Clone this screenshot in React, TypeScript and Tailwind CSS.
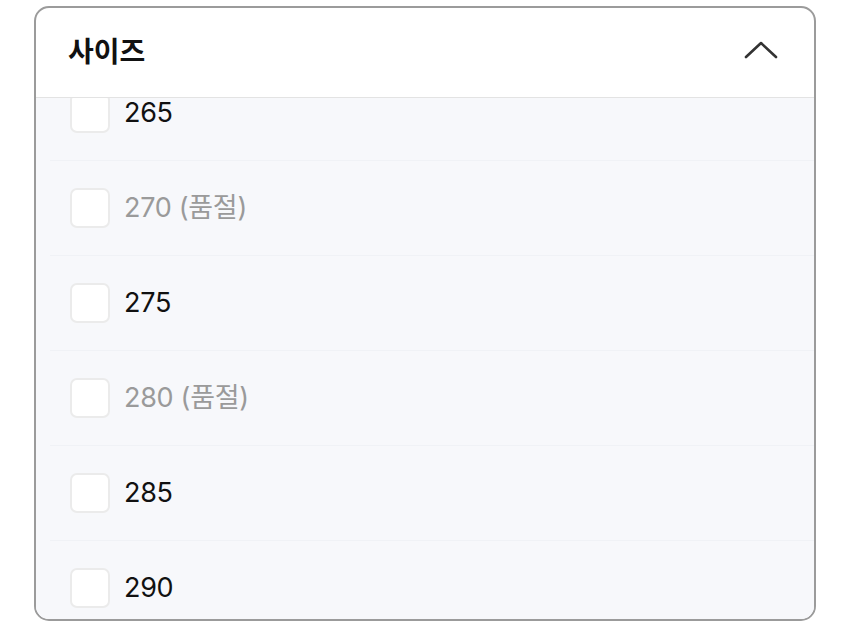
import React from 'react';

const sizes = [
  { label: '265', soldOut: false },
  { label: '270 (품절)', soldOut: true },
  { label: '275', soldOut: false },
  { label: '280 (품절)', soldOut: true },
  { label: '285', soldOut: false },
  { label: '290', soldOut: false },
];

function ChevronUp() {
  return (
    <svg width="34" height="20" viewBox="0 0 34 20" fill="none">
      <path d="M2 17 L17 3 L32 17" stroke="#333" strokeWidth="2.6" strokeLinecap="round" strokeLinejoin="round" />
    </svg>
  );
}

export default function App() {
  return (
    <div
      className="w-[850px] h-[633px] bg-white pt-[6px] pl-[34px]"
      style={{ fontFamily: 'Inter, "Noto Sans CJK KR", sans-serif' }}
    >
      {/* Size filter card */}
      <div className="w-[782px] h-[615px] border-2 border-[#9b9b9b] rounded-[15px] overflow-hidden flex flex-col bg-white">
        {/* Header */}
        <div className="h-[90px] shrink-0 flex items-center justify-between pl-[32px] pr-[36px] pb-[5px] border-b border-[#e3e3e3]">
          <span className="text-[28px] font-bold text-[#111]" style={{ fontFamily: '"Noto Sans CJK KR", sans-serif' }}>
            사이즈
          </span>
          <ChevronUp />
        </div>

        {/* Options list (scrolled) */}
        <div className="flex-1 overflow-hidden bg-[#f7f8fb]">
          <div className="-mt-[32px]">
            {sizes.map((s, i) => (
              <div key={s.label}>
                {i > 0 && <div className="ml-[14px] h-px bg-[#f0f2f6]" />}
                <div className="h-[94px] flex items-center pl-[34px] gap-[14px]">
                  <div className="w-[40px] h-[40px] rounded-[7px] bg-white border-2 border-[#ebebeb]" />
                  <span className={`text-[27px] tracking-[-0.3px] ${s.soldOut ? 'text-[#9a9a9a]' : 'text-[#111]'}`}>
                    {s.label}
                  </span>
                </div>
              </div>
            ))}
          </div>
        </div>
      </div>
    </div>
  );
}
